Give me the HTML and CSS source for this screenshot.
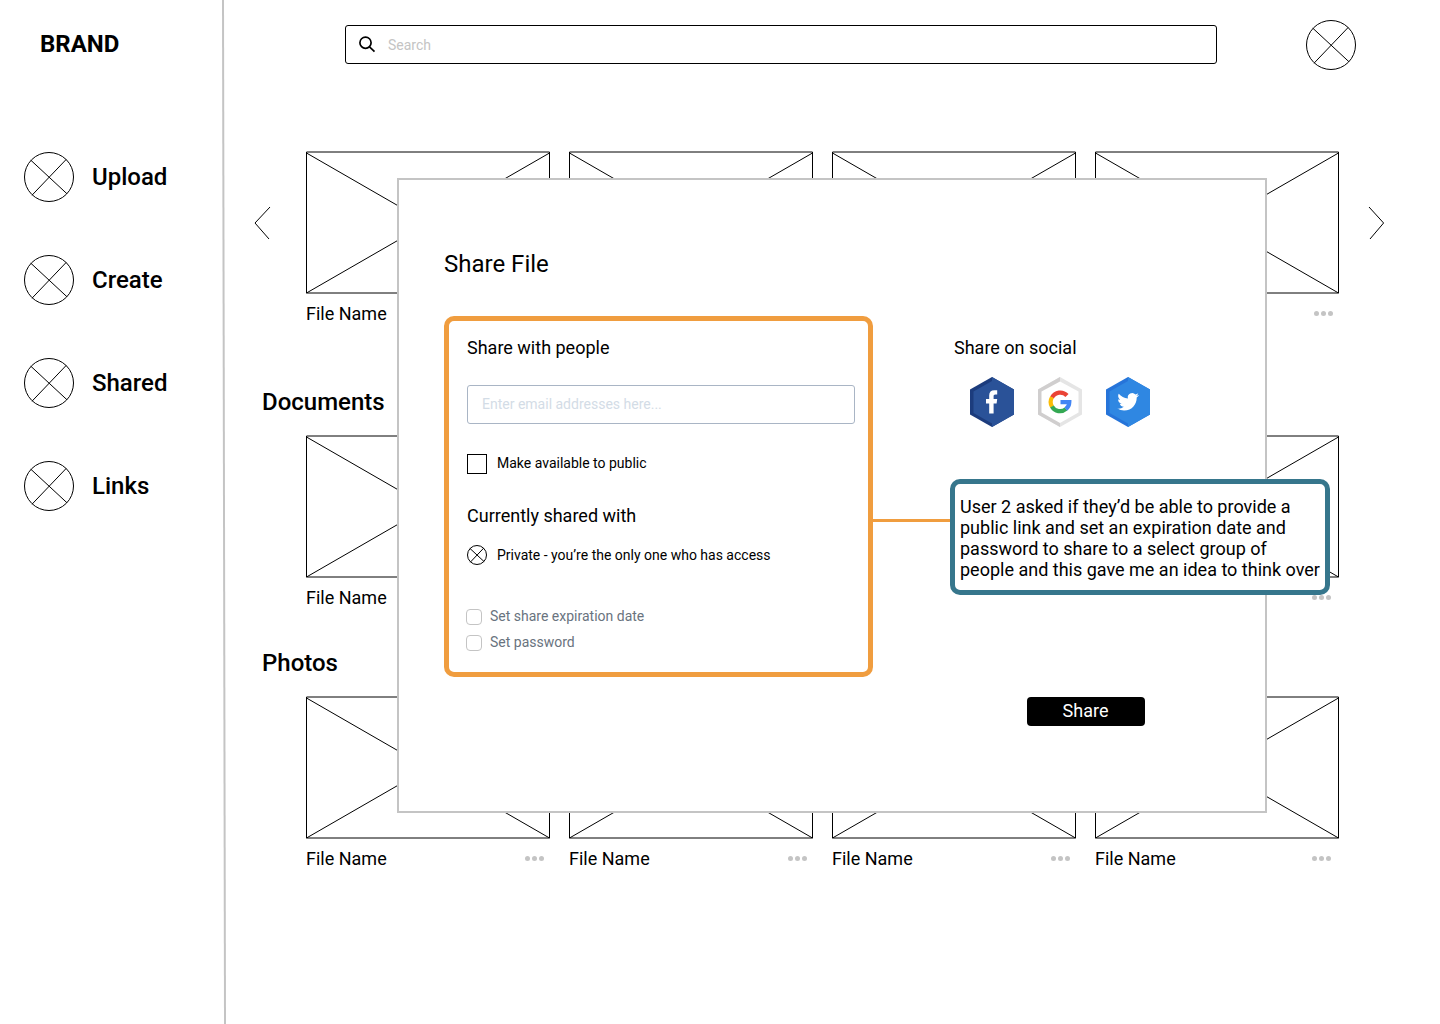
FILE: index.html
```html
<!DOCTYPE html>
<html lang="en">
<head>
<meta charset="utf-8">
<title>Share File</title>
<link rel="stylesheet" href="styles.css">
</head>
<body>
<svg width="0" height="0" class="defs">
  <symbol id="avatar" viewBox="0 0 50 50"><circle cx="25" cy="25" r="24.5"/><path d="M6.800 8.200 43 41.800M42.300 7.300 8 43.200"/></symbol>
  <symbol id="thumb" viewBox="0 0 244 143"><path d="M.5 1H243.500V142H.5ZM.5 2 243.500 142M243.500 2 .5 142"/></symbol>
  <symbol id="dots" viewBox="0 0 20 6"><circle cx="2.500" cy="2.500" r="2.500"/><circle cx="9.500" cy="2.500" r="2.500"/><circle cx="16.500" cy="2.500" r="2.500"/></symbol>
</svg>
<div class="app">
  <aside class="sidebar">
    <div class="menu">
      <div class="brand">BRAND</div>
      <nav class="nav">
        <a class="nav-item"><svg class="avatar"><use href="#avatar"/></svg>Upload</a>
        <a class="nav-item"><svg class="avatar"><use href="#avatar"/></svg>Create</a>
        <a class="nav-item"><svg class="avatar"><use href="#avatar"/></svg>Shared</a>
        <a class="nav-item"><svg class="avatar"><use href="#avatar"/></svg>Links</a>
      </nav>
    </div>
    <svg class="divider" viewBox="0 0 4 1024"><path d="M1 0 3 1024"/></svg>
  </aside>
  <main class="main">
    <header class="topbar">
      <div class="search">
        <svg class="search-icon" viewBox="0 0 18 18"><circle cx="7.500" cy="6.700" r="5.600"/><path d="M11.500 10.800 16.500 15.600"/></svg>
        <span>Search</span>
      </div>
      <svg class="avatar"><use href="#avatar"/></svg>
    </header>
    <section class="carousel">
      <svg class="chevron" viewBox="0 0 17 34"><path d="M16 1 1 17 15 33"/></svg>
      <div class="cards recent">
        <article class="card"><svg class="thumb"><use href="#thumb"/></svg><div class="meta">File Name<svg class="dots"><use href="#dots"/></svg></div></article>
        <article class="card"><svg class="thumb"><use href="#thumb"/></svg><div class="meta">File Name<svg class="dots"><use href="#dots"/></svg></div></article>
        <article class="card"><svg class="thumb"><use href="#thumb"/></svg><div class="meta">File Name<svg class="dots"><use href="#dots"/></svg></div></article>
        <article class="card"><svg class="thumb"><use href="#thumb"/></svg><div class="meta">File Name<svg class="dots"><use href="#dots"/></svg></div></article>
      </div>
      <svg class="chevron" viewBox="0 0 17 34"><path d="M1 1 15.600 17 2 33"/></svg>
    </section>
    <section class="group">
      <h2>Documents</h2>
      <div class="cards">
        <article class="card"><svg class="thumb"><use href="#thumb"/></svg><div class="meta">File Name<svg class="dots"><use href="#dots"/></svg></div></article>
        <article class="card"><svg class="thumb"><use href="#thumb"/></svg><div class="meta">File Name<svg class="dots"><use href="#dots"/></svg></div></article>
        <article class="card"><svg class="thumb"><use href="#thumb"/></svg><div class="meta">File Name<svg class="dots"><use href="#dots"/></svg></div></article>
        <article class="card"><svg class="thumb"><use href="#thumb"/></svg><div class="meta">File Name<svg class="dots"><use href="#dots"/></svg></div></article>
      </div>
    </section>
    <section class="group">
      <h2>Photos</h2>
      <div class="cards">
        <article class="card"><svg class="thumb"><use href="#thumb"/></svg><div class="meta">File Name<svg class="dots"><use href="#dots"/></svg></div></article>
        <article class="card"><svg class="thumb"><use href="#thumb"/></svg><div class="meta">File Name<svg class="dots"><use href="#dots"/></svg></div></article>
        <article class="card"><svg class="thumb"><use href="#thumb"/></svg><div class="meta">File Name<svg class="dots"><use href="#dots"/></svg></div></article>
        <article class="card"><svg class="thumb"><use href="#thumb"/></svg><div class="meta">File Name<svg class="dots"><use href="#dots"/></svg></div></article>
      </div>
    </section>
  </main>

  <div class="modal">
    <h1>Share File</h1>
    <div class="columns">
      <section class="people">
        <h3>Share with people</h3>
        <div class="email">Enter email addresses here...</div>
        <div class="option public"><span class="box"></span><span class="label">Make available to public</span></div>
        <h3>Currently shared with</h3>
        <div class="option private"><svg class="mini" viewBox="0 0 20 20"><circle cx="10" cy="10" r="9.500"/><path d="M2.900 3.400 17.100 16.600M16.800 3 3.300 17.200"/></svg>Private - you’re the only one who has access</div>
        <div class="setting"><span class="check"></span><span class="label">Set share expiration date</span></div>
        <div class="setting"><span class="check"></span><span class="label">Set password</span></div>
      </section>
      <section class="social">
        <h3>Share on social</h3>
        <div class="networks">
          <svg class="hex" viewBox="0 0 44 50"><path fill="#1c3c7d" d="M22 0 44 12.500V37.500L22 50 0 37.500V12.500Z"/><path fill="#2a5298" d="M22 0 44 12.500V37.500L22 50V46.500L3.500 36V14.500L22 4Z"/><path fill="#fff" d="M19.200 36.500V26.500H16V22H19.200V18.500C19.200 15 21 13.300 24.400 13.300H27.200V17.500H25.400C24 17.500 23.600 18.200 23.600 19.300V22H27.200L26.600 26.500H23.600V36.500Z"/></svg>
          <svg class="hex" viewBox="0 0 44 50"><path fill="#e5e5e5" d="M22 0 44 12.500V37.500L22 50 0 37.500V12.500Z"/><path fill="#d0cece" d="M22 0V50L0 37.500V12.500Z"/><path fill="#fff" d="M22 4.500 40.500 14.500V35.500L22 46 3.500 35.500V14.500Z"/><g fill="none" stroke-width="4.200"><path stroke="#ea4335" d="M14 20.500A9.300 9.300 0 0 1 29 18.500"/><path stroke="#fbbc05" d="M14 20.300A9.300 9.300 0 0 0 14 29.700"/><path stroke="#34a853" d="M13.900 29.500A9.300 9.300 0 0 0 28 32"/><path stroke="#4285f4" d="M22.500 25.200H31.300A9.300 9.300 0 0 1 27.800 32.200"/></g></svg>
          <svg class="hex" viewBox="0 0 44 50"><path fill="#2674d9" d="M22 0 44 12.500V37.500L22 50 0 37.500V12.500Z"/><path fill="#2f87e2" d="M22 0 44 12.500V37.500L22 50V46.500L3.500 36V14.500L22 4Z"/><path fill="#fff" transform="translate(11.300 14) scale(.9)" d="M23.950 4.570a10 10 0 0 1-2.820.77 4.960 4.960 0 0 0 2.160-2.720c-.95.550-2 .950-3.130 1.180a4.920 4.920 0 0 0-8.380 4.480C7.690 8.090 4.070 6.130 1.640 3.160a4.820 4.820 0 0 0-.67 2.480c0 1.710.87 3.210 2.190 4.100a4.900 4.900 0 0 1-2.230-.62v.06a4.920 4.920 0 0 0 3.950 4.830 5 5 0 0 1-2.210.08 4.940 4.940 0 0 0 4.600 3.420A9.870 9.870 0 0 1 0 19.540a13.990 13.990 0 0 0 7.550 2.210c9.050 0 14-7.500 14-13.980 0-.21 0-.42-.02-.63a9.940 9.940 0 0 0 2.460-2.550z"/></svg>
        </div>
        <button class="share">Share</button>
      </section>
    </div>
  </div>

  <div class="note">
    <span class="connector"></span>
    <p>User 2 asked if they’d be able to provide a public link and set an expiration date and password to share to a select group of people and this gave me an idea to think over</p>
  </div>
</div>
</body>
</html>
```
FILE: styles.css
```css
* { box-sizing: border-box; }
body { margin: 0; background: #fff; color: #000; font-family: Roboto, "Liberation Sans", sans-serif; font-size: 18px; line-height: 21px; }
h1, h2, h3, p { margin: 0; font-weight: 400; font-size: 18px; line-height: 21px; }
svg { display: block; flex: none; }
.defs { position: absolute; }
.app { position: relative; display: flex; width: 1440px; height: 1024px; overflow: hidden; }

.sidebar { display: flex; width: 226px; flex: none; }
.menu { width: 222px; }
.brand { padding: 30px 0 0 40px; font-size: 24px; line-height: 28px; font-weight: 700; }
.nav { display: flex; flex-direction: column; gap: 53px; padding: 94px 0 0 24px; }
.nav-item { display: flex; align-items: center; gap: 18px; font-size: 24px; line-height: 28px; font-weight: 500; }
.divider { width: 4px; height: 1024px; stroke: #c4c4c4; stroke-width: 2; }
.avatar { width: 50px; height: 50px; fill: #fff; stroke: #000; stroke-width: 1; }

.main { flex: 1; }
.topbar { display: flex; justify-content: space-between; align-items: flex-start; padding: 20px 84px 0 119px; height: 151px; }
.search { display: flex; align-items: center; gap: 12px; width: 872px; height: 39px; margin-top: 5px; padding-left: 12px; border: 1px solid #000; border-radius: 3px; color: #c4c4c4; font-size: 14px; }
.search span { padding-top: 2px; }
.search-icon { width: 18px; height: 18px; fill: none; stroke: #000; stroke-width: 1.7; }

.carousel { display: flex; align-items: flex-start; padding-left: 28px; }
.chevron { width: 17px; height: 34px; margin-top: 55px; fill: none; stroke: #000; }
.cards { display: flex; gap: 19px; padding-left: 80px; }
.recent { padding: 0 29px 0 35px; }
.card { width: 244px; }
.thumb { width: 244px; height: 143px; fill: #fff; stroke: #000; stroke-width: 1; }
.meta { display: flex; justify-content: space-between; align-items: center; margin-top: 9px; padding-right: 5px; height: 21px; }
.card:last-child .meta { padding-right: 7px; }
.recent .card:last-child .meta { padding-right: 5px; }
.dots { width: 20px; height: 6px; fill: #c4c4c4; }
.group { padding-top: 41px; }
.group h2 { padding-left: 36px; margin-bottom: 19px; font-size: 24px; line-height: 28px; font-weight: 500; }
.carousel + .group { padding-top: 64px; }

.modal { position: absolute; left: 397px; top: 178px; width: 870px; height: 635px; padding: 70px 45px 0; border: 2px solid #c4c4c4; background: #fff; }
.modal h1 { font-size: 24px; line-height: 28px; }
.columns { display: flex; gap: 81px; margin-top: 38px; }
.people { width: 429px; height: 361px; padding: 16px 13px 0 18px; border: 5px solid #f09d3f; border-radius: 10px; }
.email { height: 39px; margin: 27px 0 30px; padding-left: 14px; border: 1px solid #a9b5c5; border-radius: 3px; color: #d3dce6; font-size: 14px; line-height: 37px; }
.option { display: flex; align-items: center; gap: 10px; height: 20px; font-size: 14px; }
.public { margin-bottom: 31px; }
.label { padding-bottom: 2px; }
.box { width: 20px; height: 20px; border: 1px solid #000; }
.private { margin: 19px 0 39px; }
.mini { width: 20px; height: 20px; fill: none; stroke: #000; }
.setting { display: flex; align-items: center; gap: 8px; height: 26px; margin-left: -1px; color: #69737e; font-size: 14px; }
.check { width: 16px; height: 16px; border: 1px solid #c4c4c4; border-radius: 4px; }
.social { padding-top: 21px; }
.networks { display: flex; gap: 24px; margin: 18.5px 0 270.5px 16px; }
.hex { width: 44px; height: 50px; }
.share { display: block; width: 118px; height: 29px; margin-left: 73px; padding: 0 1px 2px 0; border: 0; border-radius: 4px; background: #000; color: #fff; font: 18px/27px Roboto, sans-serif; }

.note { position: absolute; left: 950px; top: 479px; width: 380px; height: 116px; padding: 12px 0 0 5px; border: 5px solid #36768c; border-radius: 10px; background: #fff; }
.connector { position: absolute; left: -82px; top: 35px; width: 77px; height: 3px; background: #f09d3f; }
```
